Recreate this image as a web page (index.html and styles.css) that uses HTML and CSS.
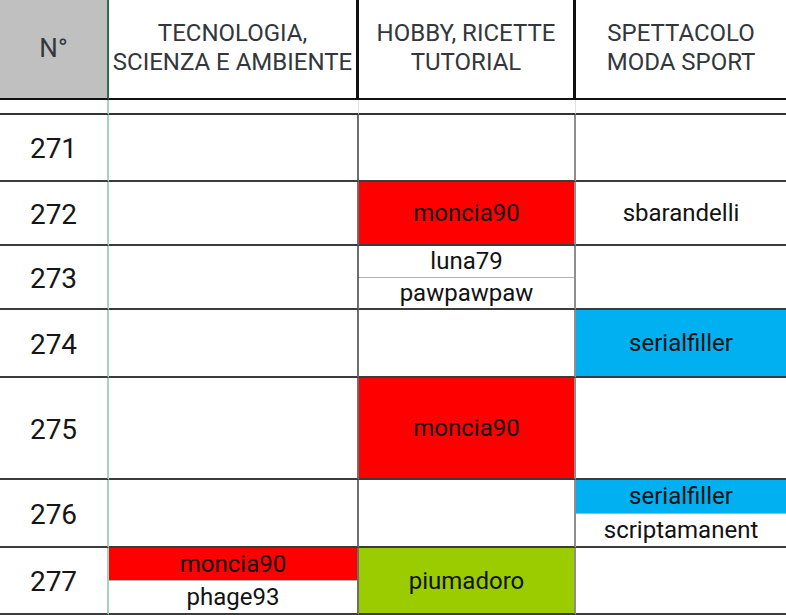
FILE: index.html
```html
<!DOCTYPE html>
<html lang="it">
<head>
<meta charset="utf-8">
<title>Tabella</title>
<link rel="stylesheet" href="styles.css">
</head>
<body>
<div class="sheet">
  <div class="c h n hn">N°</div>
  <div class="c h">TECNOLOGIA,<br>SCIENZA E AMBIENTE</div>
  <div class="c h">HOBBY, RICETTE<br>TUTORIAL</div>
  <div class="c h last">SPETTACOLO<br>MODA SPORT</div>

  <div class="c sp n"></div>
  <div class="c sp"></div>
  <div class="c sp"></div>
  <div class="c sp last"></div>

  <div class="c n">271</div>
  <div class="c"></div>
  <div class="c c2"></div>
  <div class="c last"></div>

  <div class="c n">272</div>
  <div class="c"></div>
  <div class="c c2 red">moncia90</div>
  <div class="c last">sbarandelli</div>

  <div class="c n">273</div>
  <div class="c"></div>
  <div class="c c2 split"><div class="sub">luna79</div><div class="sub">pawpawpaw</div></div>
  <div class="c last"></div>

  <div class="c n">274</div>
  <div class="c"></div>
  <div class="c c2"></div>
  <div class="c last blue">serialfiller</div>

  <div class="c n">275</div>
  <div class="c"></div>
  <div class="c c2 red">moncia90</div>
  <div class="c last"></div>

  <div class="c n">276</div>
  <div class="c"></div>
  <div class="c c2"></div>
  <div class="c last split"><div class="sub blue">serialfiller</div><div class="sub">scriptamanent</div></div>

  <div class="c n">277</div>
  <div class="c split"><div class="sub red">moncia90</div><div class="sub">phage93</div></div>
  <div class="c c2 green">piumadoro</div>
  <div class="c last"></div>
</div>
</body>
</html>
```

FILE: styles.css
```css
* { box-sizing: border-box; }
html, body { margin: 0; padding: 0; background: #fff; }
body { font-family: Roboto, "Liberation Sans", sans-serif; overflow: hidden; }

.sheet {
  display: grid;
  width: 786px;
  grid-template-columns: 109px 250px 217px 210px;
  grid-template-rows: 100px 15px 67px 64px 64px 68px 102px 68px 67px;
}

.c {
  display: flex;
  align-items: center;
  justify-content: center;
  text-align: center;
  border-right: 2px solid #6e6e6e;
  border-bottom: 2px solid #3c3c3c;
  font-size: 24px;
  line-height: 1;
  color: #121212;
  overflow: hidden;
  white-space: nowrap;
}
.c2 { border-right-color: #8e8e8e; }
.last { border-right: none; }

.n {
  border-right-color: #a1d6ba;
  font-size: 28px;
  color: #161616;
  padding-top: 3px;
}

.h {
  border-right: 3px solid #111;
  border-bottom: 2px solid #111;
  color: #33373c;
  line-height: 29px;
  font-size: 24px;
  padding-top: 0;
  padding-bottom: 3px;
}
.h.last { border-right: none; }
.hn {
  background: #c0c0c0;
  border-right: 2px solid #2f6b50;
  font-size: 26px;
  padding-bottom: 2px;
}

.sp { border-right: 1px solid #e2e2e2; border-bottom-color: #333; }
.sp.n { border-right: 2px solid #a1d6ba; }
.sp.last { border-right: none; }

.split {
  flex-direction: column;
  align-items: stretch;
  padding-top: 0;
}
.sub {
  flex: 1 1 0;
  display: flex;
  align-items: center;
  justify-content: center;
}
.sub + .sub { border-top: 1px solid #b3b3b3; }

.red { background: #ff0000; }
.blue { background: #00b0f0; }
.green { background: #9acc00; }
```
